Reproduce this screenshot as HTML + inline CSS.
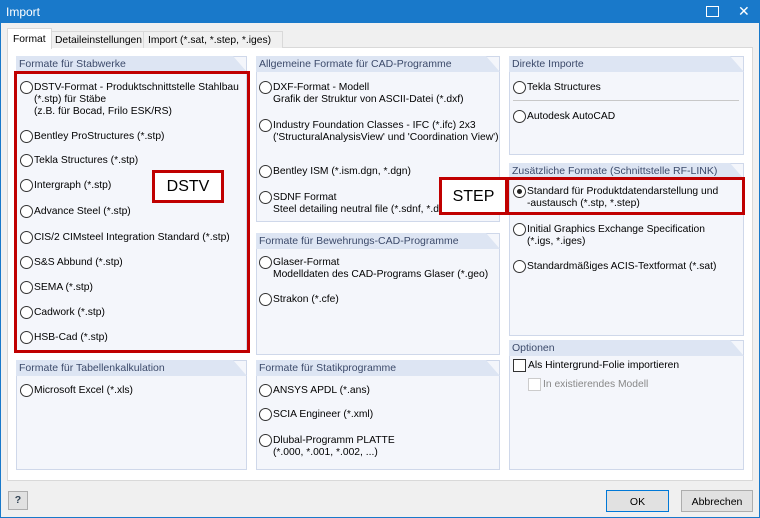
<!DOCTYPE html>
<html><head><meta charset="utf-8"><style>
*{margin:0;padding:0;box-sizing:border-box}
body{width:760px;height:518px;background:#f0f0f0;font-family:"Liberation Sans",Arial,sans-serif;font-size:10px;color:#000;position:relative;overflow:hidden}
.a{position:absolute}
.win{left:0;top:0;width:760px;height:518px;border:1px solid #1979ca}
.title{left:0;top:0;width:760px;height:23px;background:#1979ca;color:#fff;font-size:12px;padding:5px 6px}
.panel{left:7px;top:47px;width:746px;height:434px;background:#fff;border:1px solid #d9d9d9}
.tab{top:31px;height:17px;border:1px solid #d9d9d9;border-bottom:none;background:#f0f0f0;padding:3px 3px;white-space:nowrap;font-size:10.3px}
.tab.on{background:#fff;top:28px;height:21px;padding-top:5px}
.grp{background:#f4f6fb;border:1px solid #cfd8ea}
.hd{background:#dde5f3;color:#3c4a6a;padding:2px 3px;height:16px;white-space:nowrap;font-size:10.5px;clip-path:polygon(0 0,calc(100% - 14px) 0,100% 100%,0 100%)}
.r{width:13px;height:13px;border:1px solid #333;border-radius:50%;background:#fff}
.r.sel::after{content:"";position:absolute;left:3px;top:3px;width:5px;height:5px;border-radius:50%;background:#222}
.t{white-space:nowrap;line-height:12px;font-size:10.3px;padding-top:1px}
.red{border:3px solid #c00000}
.lbl{background:#fff;font-size:16px;text-align:center}
.btn{border:1px solid #adadad;background:#e1e1e1;text-align:center;padding-top:5px;font-size:10.5px}
</style></head><body>
<div class="a win"></div>
<div class="a title">Import</div>
<div class="a" style="left:706px;top:6px;width:13px;height:11px;border:1px solid #fff"></div>
<div class="a" style="left:738px;top:3px;color:#fff;font-size:14px">✕</div>

<div class="a panel"></div>
<div class="a tab" style="left:51px;width:93px">Detaileinstellungen</div>
<div class="a tab" style="left:143px;width:140px;padding-left:4px">Import (*.sat, *.step, *.iges)</div>
<div class="a tab on" style="left:7px;width:45px;padding-left:5px">Format</div>

<div class="a grp" style="left:16px;top:56px;width:231px;height:296px"></div>
<div class="a hd" style="left:16px;top:56px;width:231px">Formate für Stabwerke</div>
<div class="a grp" style="left:16px;top:360px;width:231px;height:110px"></div>
<div class="a hd" style="left:16px;top:360px;width:231px">Formate für Tabellenkalkulation</div>
<div class="a grp" style="left:256px;top:56px;width:244px;height:166px"></div>
<div class="a hd" style="left:256px;top:56px;width:244px">Allgemeine Formate für CAD-Programme</div>
<div class="a grp" style="left:256px;top:233px;width:244px;height:122px"></div>
<div class="a hd" style="left:256px;top:233px;width:244px">Formate für Bewehrungs-CAD-Programme</div>
<div class="a grp" style="left:256px;top:360px;width:244px;height:110px"></div>
<div class="a hd" style="left:256px;top:360px;width:244px">Formate für Statikprogramme</div>
<div class="a grp" style="left:509px;top:56px;width:235px;height:99px"></div>
<div class="a hd" style="left:509px;top:56px;width:235px">Direkte Importe</div>
<div class="a grp" style="left:509px;top:163px;width:235px;height:173px"></div>
<div class="a hd" style="left:509px;top:163px;width:235px">Zusätzliche Formate (Schnittstelle RF-LINK)</div>
<div class="a grp" style="left:509px;top:340px;width:235px;height:130px"></div>
<div class="a hd" style="left:509px;top:340px;width:235px">Optionen</div>

<div class="a r" style="left:20px;top:81px"></div><div class="a t" style="left:34px;top:81px">DSTV-Format - Produktschnittstelle Stahlbau<br>(*.stp) für Stäbe<br>(z.B. für Bocad, Frilo ESK/RS)</div>
<div class="a r" style="left:20px;top:130px"></div><div class="a t" style="left:34px;top:130px">Bentley ProStructures (*.stp)</div>
<div class="a r" style="left:20px;top:154px"></div><div class="a t" style="left:34px;top:154px">Tekla Structures (*.stp)</div>
<div class="a r" style="left:20px;top:179px"></div><div class="a t" style="left:34px;top:179px">Intergraph (*.stp)</div>
<div class="a r" style="left:20px;top:205px"></div><div class="a t" style="left:34px;top:205px">Advance Steel (*.stp)</div>
<div class="a r" style="left:20px;top:231px"></div><div class="a t" style="left:34px;top:231px">CIS/2 CIMsteel Integration Standard (*.stp)</div>
<div class="a r" style="left:20px;top:256px"></div><div class="a t" style="left:34px;top:256px">S&amp;S Abbund (*.stp)</div>
<div class="a r" style="left:20px;top:281px"></div><div class="a t" style="left:34px;top:281px">SEMA (*.stp)</div>
<div class="a r" style="left:20px;top:306px"></div><div class="a t" style="left:34px;top:306px">Cadwork (*.stp)</div>
<div class="a r" style="left:20px;top:331px"></div><div class="a t" style="left:34px;top:331px">HSB-Cad (*.stp)</div>
<div class="a red" style="left:14px;top:71px;width:236px;height:282px"></div>
<div class="a red lbl" style="left:152px;top:170px;width:72px;height:33px;padding-top:5px">DSTV</div>

<div class="a r" style="left:20px;top:384px"></div><div class="a t" style="left:34px;top:384px">Microsoft Excel (*.xls)</div>

<div class="a r" style="left:259px;top:81px"></div><div class="a t" style="left:273px;top:81px">DXF-Format - Modell<br>Grafik der Struktur von ASCII-Datei (*.dxf)</div>
<div class="a r" style="left:259px;top:119px"></div><div class="a t" style="left:273px;top:119px">Industry Foundation Classes - IFC (*.ifc) 2x3<br>('StructuralAnalysisView' und 'Coordination View')</div>
<div class="a r" style="left:259px;top:165px"></div><div class="a t" style="left:273px;top:165px">Bentley ISM (*.ism.dgn, *.dgn)</div>
<div class="a r" style="left:259px;top:191px"></div><div class="a t" style="left:273px;top:191px">SDNF Format<br>Steel detailing neutral file (*.sdnf, *.dat)</div>

<div class="a r" style="left:259px;top:256px"></div><div class="a t" style="left:273px;top:256px">Glaser-Format<br>Modelldaten des CAD-Programs Glaser (*.geo)</div>
<div class="a r" style="left:259px;top:293px"></div><div class="a t" style="left:273px;top:293px">Strakon (*.cfe)</div>

<div class="a r" style="left:259px;top:384px"></div><div class="a t" style="left:273px;top:384px">ANSYS APDL (*.ans)</div>
<div class="a r" style="left:259px;top:408px"></div><div class="a t" style="left:273px;top:408px">SCIA Engineer (*.xml)</div>
<div class="a r" style="left:259px;top:434px"></div><div class="a t" style="left:273px;top:434px">Dlubal-Programm PLATTE<br>(*.000, *.001, *.002, ...)</div>

<div class="a r" style="left:513px;top:81px"></div><div class="a t" style="left:527px;top:81px">Tekla Structures</div>
<div class="a" style="left:513px;top:100px;width:226px;height:1px;background:#c8c8c8"></div>
<div class="a r" style="left:513px;top:110px"></div><div class="a t" style="left:527px;top:110px">Autodesk AutoCAD</div>

<div class="a r sel" style="left:513px;top:185px"></div><div class="a t" style="left:527px;top:185px">Standard für Produktdatendarstellung und<br>-austausch (*.stp, *.step)</div>
<div class="a r" style="left:513px;top:223px"></div><div class="a t" style="left:527px;top:223px">Initial Graphics Exchange Specification<br>(*.igs, *.iges)</div>
<div class="a r" style="left:513px;top:260px"></div><div class="a t" style="left:527px;top:260px">Standardmäßiges ACIS-Textformat (*.sat)</div>
<div class="a red" style="left:506px;top:177px;width:239px;height:38px"></div>
<div class="a red lbl" style="left:439px;top:177px;width:69px;height:38px;padding-top:8px">STEP</div>

<div class="a" style="left:513px;top:359px;width:13px;height:13px;border:1px solid #333;background:#fff"></div><div class="a t" style="left:528px;top:359px">Als Hintergrund-Folie importieren</div>
<div class="a" style="left:528px;top:378px;width:13px;height:13px;border:1px solid #ccc;background:#fff"></div><div class="a t" style="left:543px;top:378px;color:#888">In existierendes Modell</div>

<div class="a btn" style="left:8px;top:491px;width:20px;height:19px;padding:2px;font-weight:bold;color:#345">?</div>
<div class="a btn" style="left:606px;top:490px;width:63px;height:22px;border:1px solid #0078d7">OK</div>
<div class="a btn" style="left:681px;top:490px;width:72px;height:22px">Abbrechen</div>
</body></html>
